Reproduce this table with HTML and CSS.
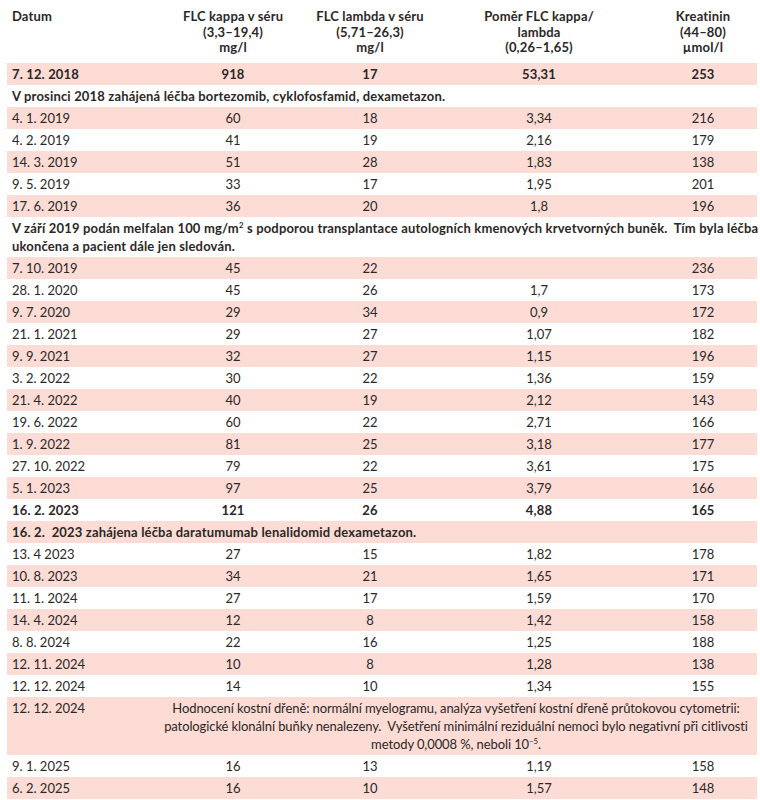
FILE: index.html
```html
<!DOCTYPE html>
<html lang="cs">
<head>
    <meta charset="UTF-8">
    <title>FLC tabulka</title>
    <link rel="stylesheet" href="styles.css">
</head>
<body>
    <table class="lab-table">
        <colgroup>
            <col class="col-date">
            <col class="col-kappa">
            <col class="col-lambda">
            <col class="col-ratio">
            <col class="col-creat">
        </colgroup>
        <thead>
            <tr>
                <th class="date">Datum</th>
                <th>FLC kappa v séru<br>(3,3–19,4)<br>mg/l</th>
                <th>FLC lambda v séru<br>(5,71–26,3)<br>mg/l</th>
                <th>Poměr FLC kappa/<br>lambda<br>(0,26–1,65)</th>
                <th>Kreatinin<br>(44–80)<br>µmol/l</th>
            </tr>
        </thead>
        <tbody>
            <tr class="strong"><td>7. 12. 2018</td><td>918</td><td>17</td><td>53,31</td><td>253</td></tr>
            <tr class="note"><td colspan="5">V prosinci 2018 zahájená léčba bortezomib, cyklofosfamid, dexametazon.</td></tr>
            <tr><td>4. 1. 2019</td><td>60</td><td>18</td><td>3,34</td><td>216</td></tr>
            <tr><td>4. 2. 2019</td><td>41</td><td>19</td><td>2,16</td><td>179</td></tr>
            <tr><td>14. 3. 2019</td><td>51</td><td>28</td><td>1,83</td><td>138</td></tr>
            <tr><td>9. 5. 2019</td><td>33</td><td>17</td><td>1,95</td><td>201</td></tr>
            <tr><td>17. 6. 2019</td><td>36</td><td>20</td><td>1,8</td><td>196</td></tr>
            <tr class="note multi"><td colspan="5">V září 2019 podán melfalan 100 mg/m<sup>2</sup> s podporou transplantace autologních kmenových krvetvorných buněk.&nbsp; Tím byla léčba<br>ukončena a pacient dále jen sledován.</td></tr>
            <tr><td>7. 10. 2019</td><td>45</td><td>22</td><td></td><td>236</td></tr>
            <tr><td>28. 1. 2020</td><td>45</td><td>26</td><td>1,7</td><td>173</td></tr>
            <tr><td>9. 7. 2020</td><td>29</td><td>34</td><td>0,9</td><td>172</td></tr>
            <tr><td>21. 1. 2021</td><td>29</td><td>27</td><td>1,07</td><td>182</td></tr>
            <tr><td>9. 9. 2021</td><td>32</td><td>27</td><td>1,15</td><td>196</td></tr>
            <tr><td>3. 2. 2022</td><td>30</td><td>22</td><td>1,36</td><td>159</td></tr>
            <tr><td>21. 4. 2022</td><td>40</td><td>19</td><td>2,12</td><td>143</td></tr>
            <tr><td>19. 6. 2022</td><td>60</td><td>22</td><td>2,71</td><td>166</td></tr>
            <tr><td>1. 9. 2022</td><td>81</td><td>25</td><td>3,18</td><td>177</td></tr>
            <tr><td>27. 10. 2022</td><td>79</td><td>22</td><td>3,61</td><td>175</td></tr>
            <tr><td>5. 1. 2023</td><td>97</td><td>25</td><td>3,79</td><td>166</td></tr>
            <tr class="strong"><td>16. 2. 2023</td><td>121</td><td>26</td><td>4,88</td><td>165</td></tr>
            <tr class="note"><td colspan="5">16. 2.&nbsp; 2023 zahájena léčba daratumumab lenalidomid dexametazon.</td></tr>
            <tr><td>13. 4 2023</td><td>27</td><td>15</td><td>1,82</td><td>178</td></tr>
            <tr><td>10. 8. 2023</td><td>34</td><td>21</td><td>1,65</td><td>171</td></tr>
            <tr><td>11. 1. 2024</td><td>27</td><td>17</td><td>1,59</td><td>170</td></tr>
            <tr><td>14. 4. 2024</td><td>12</td><td>8</td><td>1,42</td><td>158</td></tr>
            <tr><td>8. 8. 2024</td><td>22</td><td>16</td><td>1,25</td><td>188</td></tr>
            <tr><td>12. 11. 2024</td><td>10</td><td>8</td><td>1,28</td><td>138</td></tr>
            <tr><td>12. 12. 2024</td><td>14</td><td>10</td><td>1,34</td><td>155</td></tr>
            <tr class="finding">
                <td>12. 12. 2024</td>
                <td colspan="4">Hodnocení kostní dřeně: normální myelogramu, analýza vyšetření kostní dřeně průtokovou cytometrii:<br>patologické klonální buňky nenalezeny.&nbsp; Vyšetření minimální reziduální nemoci bylo negativní při citlivosti<br>metody 0,0008 %, neboli 10<sup>–5</sup>.</td>
            </tr>
            <tr><td>9. 1. 2025</td><td>16</td><td>13</td><td>1,19</td><td>158</td></tr>
            <tr><td>6. 2. 2025</td><td>16</td><td>10</td><td>1,57</td><td>148</td></tr>
        </tbody>
    </table>
</body>
</html>
```

FILE: styles.css
```css
* {
    margin: 0;
    padding: 0;
    box-sizing: border-box;
}

:root {
    --pink: #fcdcd4;
    --text: #2b2727;
}

body {
    background: #ffffff;
    color: var(--text);
    font-family: Lato, "Open Sans", sans-serif;
    font-size: 13px;
}

.lab-table {
    width: 750px;
    margin: 0 7px;
    border-collapse: collapse;
    table-layout: fixed;
}

.col-date { width: 148px; }
.col-kappa { width: 156px; }
.col-lambda { width: 118px; }
.col-ratio { width: 220px; }
.col-creat { width: 108px; }

th {
    font-weight: 700;
    letter-spacing: 0.15px;
    text-align: center;
    vertical-align: top;
    line-height: 15.5px;
    padding: 9px 5px 7px;
}

th.date {
    text-align: left;
}

td {
    height: 22px;
    line-height: 22px;
    padding: 0 5px;
    text-align: center;
    white-space: nowrap;
}

td:first-child {
    text-align: left;
}

tbody tr:nth-child(odd) {
    background: var(--pink);
}

.strong td {
    font-weight: 700;
    letter-spacing: 0.15px;
}

.note td {
    font-weight: 700;
    letter-spacing: 0.17px;
    text-align: left;
}

.multi td,
.finding td {
    line-height: 18px;
    padding-top: 2px;
    padding-bottom: 2px;
    vertical-align: top;
}

.finding td + td {
    text-align: center;
    letter-spacing: -0.1px;
}

sup {
    font-size: 0.6em;
    line-height: 0;
    vertical-align: 0.6em;
}
```
